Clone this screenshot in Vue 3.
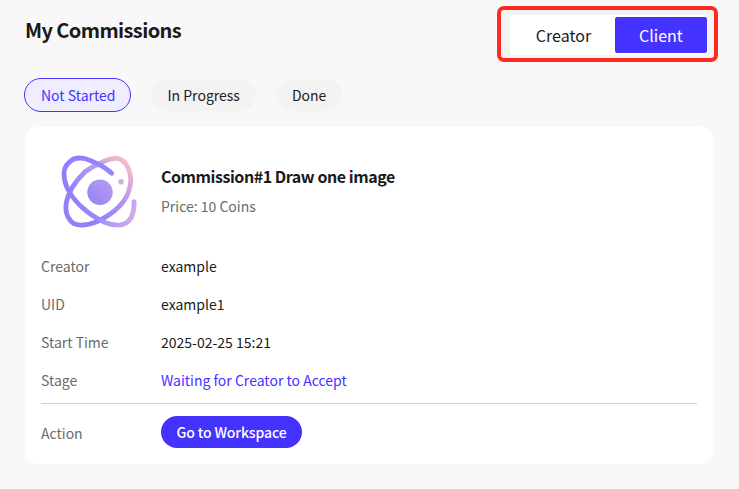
<script setup>
const tabs = [
  { label: 'Not Started', active: true },
  { label: 'In Progress', active: false },
  { label: 'Done', active: false },
]
const rows = [
  { label: 'Creator', value: 'example' },
  { label: 'UID', value: 'example1' },
  { label: 'Start Time', value: '2025-02-25 15:21' },
  { label: 'Stage', value: 'Waiting for Creator to Accept', accent: true, last: true },
]
</script>

<template>
  <div class="page">
    <header class="header">
      <h1 class="title">My Commissions</h1>
      <div class="switch-frame">
        <div class="switch">
          <button class="seg">Creator</button>
          <button class="seg seg-on">Client</button>
        </div>
      </div>
    </header>

    <nav class="tabs">
      <span v-for="t in tabs" :key="t.label" class="tab" :class="{ 'tab-on': t.active }">{{ t.label }}</span>
    </nav>

    <section class="card">
      <div class="head">
        <svg class="logo" width="90" height="90" viewBox="0 0 90 90" fill="none">
          <defs>
            <linearGradient id="ring" x1="20" y1="50" x2="64" y2="6" gradientUnits="userSpaceOnUse">
              <stop offset="0" stop-color="#8f80fb" />
              <stop offset="0.5" stop-color="#b195f4" />
              <stop offset="1" stop-color="#f8bcc6" />
            </linearGradient>
            <linearGradient id="ring2" x1="12" y1="40" x2="80" y2="70" gradientUnits="userSpaceOnUse">
              <stop offset="0" stop-color="#8f80fb" />
              <stop offset="0.5" stop-color="#9a86fa" />
              <stop offset="1" stop-color="#d3aaec" />
            </linearGradient>
            <linearGradient id="core" x1="36" y1="56" x2="58" y2="34" gradientUnits="userSpaceOnUse">
              <stop offset="0" stop-color="#9a83f6" />
              <stop offset="1" stop-color="#b79cef" />
            </linearGradient>
          </defs>
          <path d="M46 16.300C51 13.500 56 11.500 61 11.300C66 11 70 14 72.700 18C75.500 23 77 28.500 76.700 34.700C76 42 73.500 49 69.300 54.700C64 61.500 57 67 49.300 71.300C43 75 36 77.500 29.300 78C23.500 78.300 18.500 77 16 73C12.800 69 11.500 63.500 12 58C12.500 52 15 46.500 17.700 41.300C21.500 35 26 29.500 31 24.700C36 21 41 18.500 46 16.300Z"
            stroke="url(#ring)" stroke-width="4.800" stroke-linecap="round" />
          <path d="M57.700 26.300C52 21 47 18.500 42.700 16.300C38 14 33 11.800 29.300 11.300C24 10.500 19 11.500 16 14.700C12 18 10 22 10 26.300C10 32 11.500 38 14.300 43C18 50 23 56 29.300 61.300C35 67 42 71 49.300 74.700C55 77 60.500 78.300 66 78C71 77.500 75 74.500 77.700 69.700C79.500 65 80.500 60 80 54.700"
            stroke="url(#ring2)" stroke-width="4.800" stroke-linecap="round" />
          <circle cx="46" cy="45.300" r="12.700" fill="url(#core)" />
          <circle cx="67" cy="34.700" r="2.800" fill="#d9aee4" />
        </svg>
        <div class="head-text">
          <div class="name">Commission#1 Draw one image</div>
          <div class="price">Price: 10 Coins</div>
        </div>
      </div>

      <div v-for="r in rows" :key="r.label" class="row" :class="{ 'row-last': r.last }">
        <span class="label">{{ r.label }}</span>
        <span class="value" :class="{ accent: r.accent }">{{ r.value }}</span>
      </div>

      <div class="action">
        <span class="label">Action</span>
        <button class="go">Go to Workspace</button>
      </div>
    </section>
  </div>
</template>

<style>
html, body { margin: 0; background: #f8f8f8; }
</style>

<style scoped>
.page {
  width: 739px;
  height: 489px;
  box-sizing: border-box;
  padding: 0 26px 0 25px;
  background: #f8f8f8;
  font-family: "Noto Sans CJK SC", "Noto Sans", sans-serif;
  color: #1a1a1a;
  overflow: hidden;
}
.header {
  display: flex;
  justify-content: space-between;
  align-items: flex-start;
  height: 78px;
}
.title {
  margin: 15px 0 0;
  font-size: 20px;
  line-height: 29px;
  font-weight: 700;
  letter-spacing: -0.6px;
}
.switch-frame {
  margin: 6px -5px 0 0;
  padding: 5px 7px 3px 9px;
  border: 4px solid #ff2a1f;
  border-radius: 7px;
  background: #f3f3f3;
}
.switch {
  display: flex;
  width: 197px;
  height: 40px;
  box-sizing: border-box;
  padding: 2px 0;
  background: #fff;
  border-radius: 2px;
}
.seg {
  border: 0;
  padding: 0 0 0 2px;
  margin: 0;
  width: 105px;
  background: transparent;
  font: inherit;
  font-size: 16px;
  color: #1a1a1a;
}
.seg-on {
  width: 92px;
  padding: 0;
  background: #4433ff;
  color: #fff;
  border-radius: 2px;
}
.tabs {
  display: flex;
  gap: 20px;
  margin-left: -1px;
  height: 49px;
}
.tab {
  display: flex;
  align-items: center;
  height: 32px;
  margin-top: 1px;
  padding: 0 16px;
  border-radius: 17px;
  background: #f3f3f3;
  font-size: 14px;
  color: #222;
}
.tab-on {
  height: 34px;
  margin-top: 0;
  padding: 0 15px 0 16px;
  box-sizing: border-box;
  border: 1px solid #4433ff;
  background: #efedff;
  color: #4433ff;
}
.card {
  height: 337px;
  box-sizing: border-box;
  padding: 11px 16px 0;
  background: #fff;
  border-radius: 12px;
}
.head {
  display: flex;
  align-items: center;
  height: 109px;
}
.logo {
  flex: none;
  width: 90px;
  height: 90px;
  margin: -1px 17px 0 13px;
}
.head-text {
  display: flex;
  flex-direction: column;
  gap: 8px;
  margin-top: -5px;
}
.name {
  font-size: 16px;
  line-height: 24px;
  font-weight: 700;
  letter-spacing: -0.45px;
}
.price {
  font-size: 14px;
  line-height: 20px;
  color: #6b6b6b;
}
.row {
  display: flex;
  align-items: center;
  height: 38px;
  font-size: 14px;
}
.row-last {
  border-bottom: 1px solid #cfcfcf;
  height: 43px;
  padding-bottom: 4px;
  box-sizing: border-box;
}
.label {
  width: 120px;
  flex: none;
  color: #6b6b6b;
  font-size: 14px;
}
.value { color: #1a1a1a; }
.accent { color: #4433ff; }
.action {
  display: flex;
  align-items: center;
  height: 58px;
}
.go {
  border: 0;
  margin: -2px 0 0;
  height: 32px;
  width: 141px;
  padding: 0;
  border-radius: 16px;
  background: #4433ff;
  color: #fff;
  font: inherit;
  font-size: 14px;
  font-weight: 500;
  letter-spacing: -0.12px;
}
</style>
